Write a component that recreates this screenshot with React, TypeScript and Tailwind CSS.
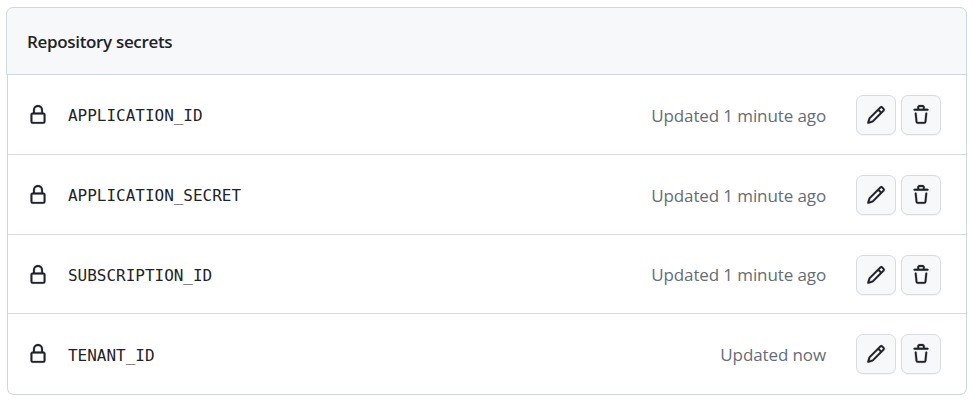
const LOCK =
  'M4 4a4 4 0 0 1 8 0v2h.25c.966 0 1.75.784 1.75 1.75v5.5A1.75 1.75 0 0 1 12.25 15h-8.5A1.75 1.75 0 0 1 2 13.25v-5.5C2 6.784 2.784 6 3.75 6H4Zm8.25 3.5h-8.5a.25.25 0 0 0-.25.25v5.5c0 .138.112.25.25.25h8.5a.25.25 0 0 0 .25-.25v-5.5a.25.25 0 0 0-.25-.25ZM10.5 6V4a2.5 2.5 0 1 0-5 0v2Z';
const PENCIL =
  'M11.013 1.427a1.75 1.75 0 0 1 2.474 0l1.086 1.086a1.75 1.75 0 0 1 0 2.474l-8.61 8.61c-.21.21-.47.364-.756.445l-3.251.93a.75.75 0 0 1-.927-.928l.929-3.25c.081-.286.235-.547.445-.758l8.61-8.61Zm.176 4.823L9.75 4.81l-6.286 6.287a.253.253 0 0 0-.064.108l-.558 1.953 1.953-.558a.253.253 0 0 0 .108-.064Zm1.238-3.763a.25.25 0 0 0-.354 0L10.811 3.75l1.439 1.44 1.263-1.263a.25.25 0 0 0 0-.354Z';
const TRASH =
  'M11 1.75V3h2.25a.75.75 0 0 1 0 1.5H2.75a.75.75 0 0 1 0-1.5H5V1.75C5 .784 5.784 0 6.75 0h2.5C10.216 0 11 .784 11 1.75ZM4.496 6.675l.66 6.6a.25.25 0 0 0 .249.225h5.19a.25.25 0 0 0 .249-.225l.66-6.6a.75.75 0 0 1 1.492.149l-.66 6.6A1.748 1.748 0 0 1 10.595 15h-5.19a1.75 1.75 0 0 1-1.741-1.575l-.66-6.6a.75.75 0 1 1 1.492-.15ZM6.5 1.75V3h3V1.75a.25.25 0 0 0-.25-.25h-2.5a.25.25 0 0 0-.25.25Z';

function Icon({ path }: { path: string }) {
  return (
    <svg
      viewBox="0 0 16 16"
      width="20"
      height="20"
      fill="currentColor"
      stroke="currentColor"
      strokeWidth="0.18"
      aria-hidden="true"
      className="block shrink-0 overflow-visible"
    >
      <path d={path} />
    </svg>
  );
}

function IconButton({ path, label }: { path: string; label: string }) {
  return (
    <button
      type="button"
      aria-label={label}
      className="flex size-10 items-center justify-center rounded-[7px] border border-[#d8dbdf] bg-[#f6f8fa] shadow-[0_1px_0_rgba(31,35,40,0.04)]"
    >
      <Icon path={path} />
    </button>
  );
}

const secrets = [
  { name: 'APPLICATION_ID', updated: 'Updated 1 minute ago', row: 'h-[80px]', code: 'pt-0.5', time: 'pt-0.5' },
  { name: 'APPLICATION_SECRET', updated: 'Updated 1 minute ago', row: 'h-[80px]', code: 'pt-0.5', time: 'pt-0.5' },
  { name: 'SUBSCRIPTION_ID', updated: 'Updated 1 minute ago', row: 'h-[79px] pt-px', code: 'pt-0.5', time: '' },
  { name: 'TENANT_ID', updated: 'Updated now', row: 'h-[80px]', code: 'pt-[3px]', time: 'pt-0.5' },
];

export default function App() {
  return (
    <div className="h-[403px] w-[974px] bg-white pt-[7px] pl-[6px] font-['Open_Sans','Noto_Sans',sans-serif] text-[#1f2328]">
      <section className="w-[961px]">
        <header className="flex h-[68px] items-center rounded-t-[7px] border border-[#d0d7de] bg-[#f6f8fa] pl-[20px]">
          <h2 className="pt-0.5 text-[17px] leading-6 font-semibold tracking-[-0.33px]">Repository secrets</h2>
        </header>
        <ul className="ml-px rounded-b-[7px] border border-t-0 border-[#d0d7de]">
          {secrets.map((s) => (
            <li
              key={s.name}
              className={`flex items-center border-b border-[#d5dae1] pr-[25px] pl-5 last:border-b-0 ${s.row}`}
            >
              <Icon path={LOCK} />
              <code className={`ml-5 font-['DejaVu_Sans_Mono',monospace] text-[16px] leading-6 tracking-[-0.02px] ${s.code}`}>
                {s.name}
              </code>
              <span className={`ml-auto text-[17px] leading-6 tracking-[-0.11px] text-[#656d76] ${s.time}`}>
                {s.updated}
              </span>
              <div className="ml-[30px] flex gap-[5px]">
                <IconButton path={PENCIL} label="Edit secret" />
                <IconButton path={TRASH} label="Remove secret" />
              </div>
            </li>
          ))}
        </ul>
      </section>
    </div>
  );
}
